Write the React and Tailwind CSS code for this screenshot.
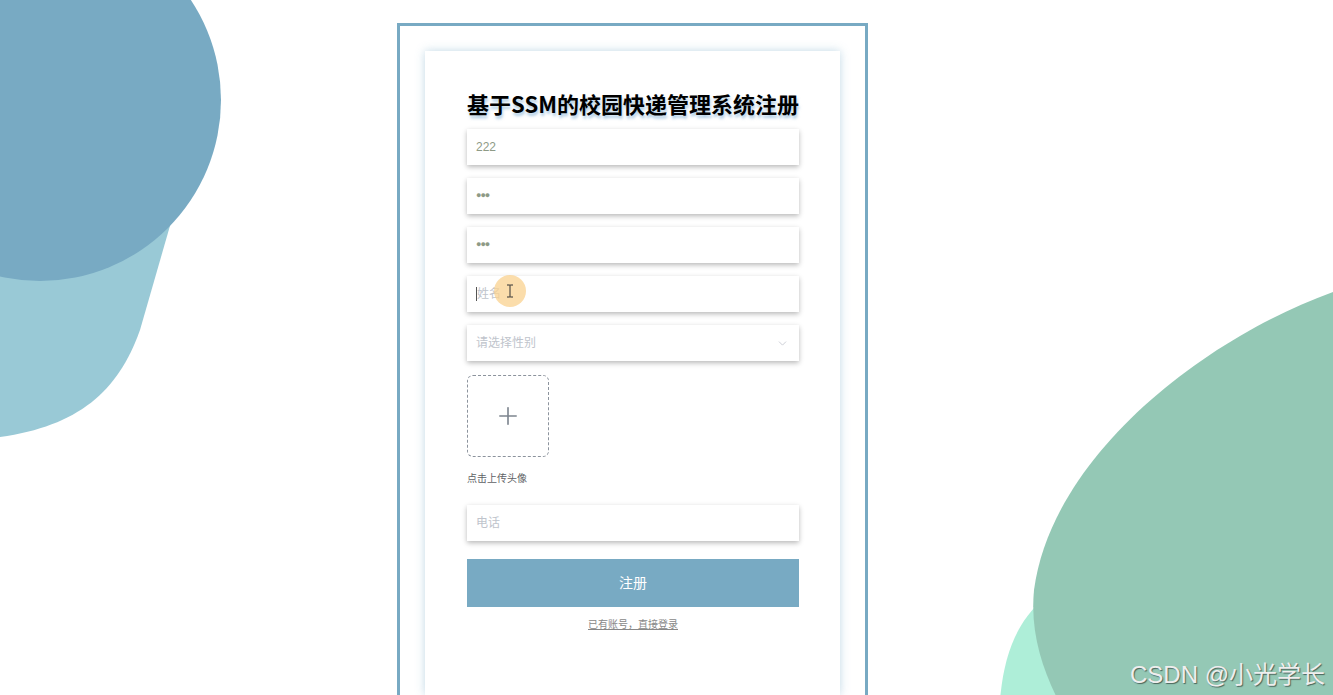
import React from "react";
import { ChevronDown, Plus } from "lucide-react";

const FONT = "font-['Liberation_Sans','Noto_Sans_CJK_SC',sans-serif]";

function Field({ children, className = "" }) {
  return (
    <div className={`h-9 bg-white shadow-[0_2px_5px_rgba(0,0,0,0.28)] flex items-center px-[9px] ${className}`}>
      {children}
    </div>
  );
}

function Blobs() {
  return (
    <svg className="absolute inset-0 pointer-events-none" width="1333" height="695" viewBox="0 0 1333 695">
      <path d="M0,150 L176,205 L140,330 C118,392 78,426 0,437 Z" fill="#99c9d6" />
      <circle cx="40" cy="100" r="181" fill="#78aac3" />
      <path d="M1000,700 C1004,652 1018,622 1042,600 L1066,700 Z" fill="#aeeed8" />
      <path d="M1333,292 C1205,338 1052,455 1034,590 C1030,632 1042,668 1058,700 L1333,700 Z" fill="#94c8b5" />
    </svg>
  );
}

export default function App() {
  return (
    <div className={`relative w-[1333px] h-[695px] overflow-hidden bg-white ${FONT}`}>
      <Blobs />

      <div className="relative ml-[397px] mt-[23px] w-[471px] h-[700px] border-[3px] border-[#78aac3] p-[25px] bg-white">
        <div className="h-full bg-white shadow-[0_0_9px_rgba(120,170,200,0.45)] pl-[42px] pr-[41px] pt-[37px]">
          <h1 className="-mx-6 whitespace-nowrap text-[22px] leading-[30px] font-bold text-center text-black [text-shadow:1px_3px_3px_rgba(120,170,210,0.6)] font-['Noto_Sans_CJK_SC',sans-serif]">
            基于SSM的校园快递管理系统注册
          </h1>

          <div className="mt-[11px] flex flex-col gap-[13px]">
            <Field>
              <span className="text-[12px] text-[#8e9a86]">222</span>
            </Field>
            <Field>
              <span className="text-[9px] tracking-[-1px] text-[#8e9a86]">●●●</span>
            </Field>
            <Field>
              <span className="text-[9px] tracking-[-1px] text-[#8e9a86]">●●●</span>
            </Field>
            <Field className="relative">
              <span className="w-px h-[14px] bg-[#555]"></span>
              <span className="text-[12px] text-[#c0c4cc]">姓名</span>
              <div className="absolute left-[27px] top-[-1px] w-[32px] h-[32px] rounded-full bg-[#f9d18f]/75 flex items-center justify-center">
                <svg width="8" height="14" viewBox="0 0 8 14">
                  <path d="M1 1 H3 M5 1 H7 M4 1.5 V12.5 M1 13 H3 M5 13 H7 M3 1 Q4 1.3 5 1 M3 13 Q4 12.7 5 13" stroke="#333" strokeWidth="1" fill="none" />
                </svg>
              </div>
            </Field>
            <Field className="justify-between">
              <span className="text-[12px] text-[#c0c4cc]">请选择性别</span>
              <ChevronDown className="w-[13px] h-[13px] text-[#c0c4cc] mr-[1px]" strokeWidth={1.5} />
            </Field>
          </div>

          <div className="mt-[14px] w-[82px] h-[82px] border border-dashed border-[#8c939d] rounded-[6px] flex items-center justify-center">
            <Plus className="w-[28px] h-[28px] text-[#7d858f]" strokeWidth={1.4} />
          </div>
          <div className="mt-[14px] text-[10px] leading-4 text-[#606266]">点击上传头像</div>

          <Field className="mt-[18px]">
            <span className="text-[12px] text-[#c0c4cc]">电话</span>
          </Field>

          <button className="mt-[18px] w-full h-12 bg-[#78aac3] text-white text-[14px] flex items-center justify-center">
            注册
          </button>
          <div className="mt-[8px] text-center leading-4">
            <a className="text-[10px] text-[#888] underline">已有账号，直接登录</a>
          </div>
        </div>
      </div>

      <div className="absolute right-[8px] bottom-[8px] text-[24px] leading-none text-[#eeeeee] [text-shadow:1px_1px_1px_rgba(0,0,0,0.5)] font-['Liberation_Sans','Noto_Sans_CJK_SC',sans-serif]">
        CSDN @小光学长
      </div>
    </div>
  );
}
